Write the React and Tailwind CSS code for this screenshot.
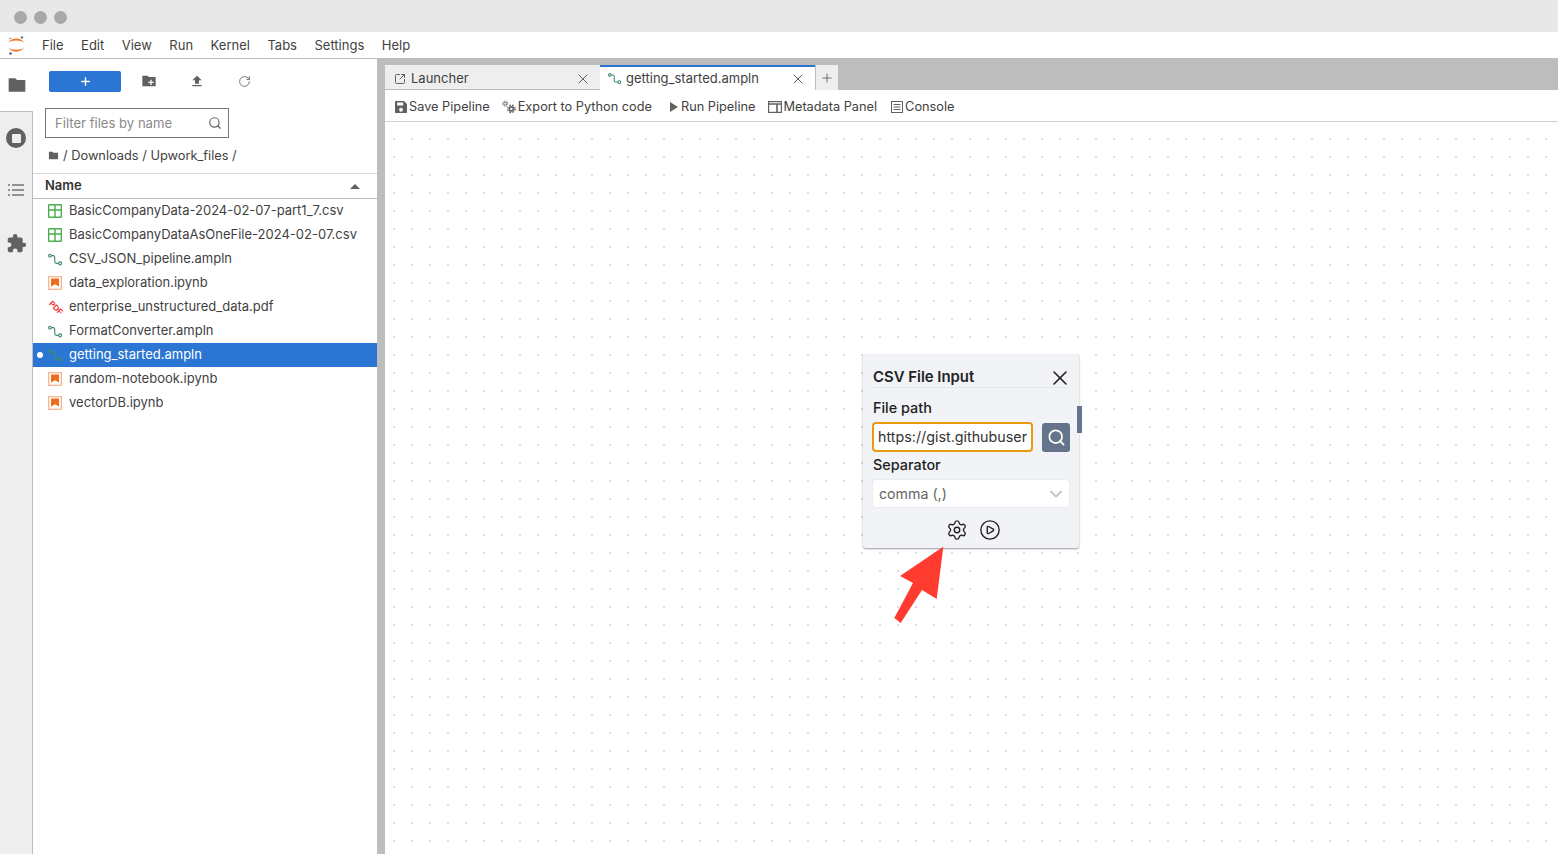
import { X, Search, Settings, CirclePlay, ChevronDown, Plus, RotateCw, SquareArrowOutUpRight } from 'lucide-react';

const menus = ['File', 'Edit', 'View', 'Run', 'Kernel', 'Tabs', 'Settings', 'Help'];

const files = [
  { name: 'BasicCompanyData-2024-02-07-part1_7.csv', type: 'csv' },
  { name: 'BasicCompanyDataAsOneFile-2024-02-07.csv', type: 'csv' },
  { name: 'CSV_JSON_pipeline.ampln', type: 'ampln' },
  { name: 'data_exploration.ipynb', type: 'nb' },
  { name: 'enterprise_unstructured_data.pdf', type: 'pdf' },
  { name: 'FormatConverter.ampln', type: 'ampln' },
  { name: 'getting_started.ampln', type: 'ampln', active: true },
  { name: 'random-notebook.ipynb', type: 'nb' },
  { name: 'vectorDB.ipynb', type: 'nb' },
];

function FolderIcon({ className, plus }) {
  return (
    <svg viewBox="0 0 24 24" className={className} fill="#616161">
      <path d="M10 4H2v16h20V6H12l-2-2z" />
      {plus && <path d="M14 10h2v3h3v2h-3v3h-2v-3h-3v-2h3z" fill="#fff" />}
    </svg>
  );
}

function PipelineIcon({ className = 'w-[15px] h-[15px]' }) {
  return (
    <svg viewBox="0 0 16 16" className={className} fill="none" stroke="#418a72" strokeWidth="1.3">
      <circle cx="2.2" cy="3.6" r="1.6" />
      <circle cx="13.8" cy="12.4" r="1.7" />
      <path d="M3.8 3.6h2.1c1.2 0 1.8.8 1.8 1.8v5c0 1.2.6 2 1.8 2h2.6" />
    </svg>
  );
}

function FileIcon({ type }) {
  if (type === 'csv') {
    return (
      <svg viewBox="0 0 14 14" className="w-[14px] h-[14px]" fill="none" stroke="#4caf50" strokeWidth="1.4">
        <rect x="0.7" y="0.7" width="12.6" height="12.6" rx="0.5" />
        <path d="M0.7 6h12.6M7 0.7v12.6" />
      </svg>
    );
  }
  if (type === 'nb') {
    return (
      <svg viewBox="0 0 14 14" className="w-[14px] h-[14px]">
        <rect x="0" y="0" width="14" height="14" rx="0.5" fill="#f9b58c" />
        <rect x="1.3" y="1.3" width="11.4" height="11.4" fill="#fff" />
        <path d="M3 2.5h8v8L7 8.2 3 10.5z" fill="#ef6c1a" />
      </svg>
    );
  }
  if (type === 'pdf') {
    return (
      <span className="block w-[15px] h-[15px] rotate-45 text-[8px] leading-[15px] font-bold text-center whitespace-nowrap text-[#ef2b2d] font-['Liberation_Sans',sans-serif]">
        PDF
      </span>
    );
  }
  return <PipelineIcon />;
}

function ToolbarItem({ icon, label, className = '' }) {
  return (
    <div className={`flex items-center ${className}`}>
      {icon}
      <span>{label}</span>
    </div>
  );
}

export default function App() {
  return (
    <div className="w-[1558px] h-[854px] overflow-hidden flex flex-col bg-white text-[13px] text-[#3f3f3f] font-['Inter','Noto_Sans',sans-serif]">
      {/* window chrome */}
      <div className="h-8 shrink-0 bg-[#e8e8e8] flex items-center gap-[7px] pl-[14px] pt-[2px]">
        <div className="w-[13px] h-[13px] rounded-full bg-[#a8a8a8]" />
        <div className="w-[13px] h-[13px] rounded-full bg-[#a8a8a8]" />
        <div className="w-[13px] h-[13px] rounded-full bg-[#a8a8a8]" />
      </div>

      {/* menu bar */}
      <div className="h-[27px] shrink-0 flex items-center border-b border-[#bdbdbd] pt-[1px]">
        <div className="w-[33px] pl-[8px] shrink-0">
          <svg viewBox="0 0 17 20" className="w-[17px] h-[20px]">
            <path d="M0.5 6.5C3 1.2 13 1.2 16 6.5 13 3.8 3 3.8 0.5 6.5z" fill="#f37726" />
            <path d="M0.5 11.5C3 17 13 17 16 11.5 13 14.4 3 14.4 0.5 11.5z" fill="#f37726" />
            <circle cx="14" cy="1.5" r="1.2" fill="#757575" />
            <circle cx="2" cy="2.5" r="0.8" fill="#757575" />
            <circle cx="2.5" cy="17.5" r="1.3" fill="#616161" />
          </svg>
        </div>
        <div className="flex items-center gap-[17.5px] pl-[9px]">
          {menus.map((m) => (
            <span key={m}>{m}</span>
          ))}
        </div>
      </div>

      <div className="flex-1 flex min-h-0">
        {/* icon rail */}
        <div className="w-[33px] shrink-0 flex flex-col">
          <div className="h-[52px] shrink-0 flex items-center justify-center">
            <FolderIcon className="w-[20px] h-[20px]" />
          </div>
          <div className="flex-1 bg-[#eeeeee] border-t border-r border-[#bdbdbd] flex flex-col items-center">
            <div className="mt-[16px] w-5 h-5 rounded-full bg-[#616161] flex items-center justify-center">
              <div className="w-[9px] h-[9px] rounded-[1px] bg-[#eeeeee]" />
            </div>
            <svg viewBox="0 0 16 12" className="mt-[36px] w-4 h-3" stroke="#757575" strokeWidth="1.4" fill="none">
              <path d="M4 1h12M4 6h12M4 11h12M0 1h2M0 6h2M0 11h2" />
            </svg>
            <svg viewBox="0 0 24 24" className="mt-[37px] w-[21px] h-[21px]" fill="#616161">
              <path d="M20.5 11H19V7a2 2 0 0 0-2-2h-4V3.5a2.5 2.5 0 0 0-5 0V5H4a2 2 0 0 0-2 2v3.8h1.5a2.7 2.7 0 0 1 0 5.4H2V20a2 2 0 0 0 2 2h3.8v-1.5a2.7 2.7 0 0 1 5.4 0V22H17a2 2 0 0 0 2-2v-4h1.5a2.5 2.5 0 0 0 0-5z" />
            </svg>
          </div>
        </div>

        {/* file browser */}
        <div className="w-[344px] shrink-0 flex flex-col">
          <div className="h-[49px] shrink-0 flex items-center pl-4 pb-[5px]">
            <div className="w-[72px] h-[21px] bg-[#2b76d2] rounded-[2px] flex items-center justify-center">
              <Plus className="w-[13px] h-[13px] text-white" strokeWidth={2.5} />
            </div>
            <FolderIcon plus className="ml-[20px] w-[16px] h-[16px]" />
            <svg viewBox="0 0 24 24" className="ml-[32px] w-[16px] h-[16px]" fill="#616161">
              <path d="M5 20h14v-2H5v2zM12 4l-7 7h4v5h6v-5h4l-7-7z" />
            </svg>
            <RotateCw className="ml-[33px] mt-[1px] w-[13px] h-[13px] text-[#616161]" strokeWidth={1.6} />
          </div>
          <div className="pl-3">
            <div className="w-[184px] h-[30px] border border-[#757575] flex items-center justify-between pl-[9px] pr-[6px]">
              <span className="text-[#8a8a8a] text-[13.1px] pt-[1px]">Filter files by name</span>
              <Search className="w-[14px] h-[14px] -mt-[1px] text-[#616161]" />
            </div>
          </div>
          <div className="h-[35px] shrink-0 flex items-center pl-[15px] gap-[4px] text-[12.8px]">
            <FolderIcon className="w-[11px] h-[11px]" />
            <span>/ Downloads / Upwork_files /</span>
          </div>
          <div className="h-[26px] shrink-0 flex items-center justify-between pl-3 pr-[17px] border-y border-[#d6d6d6] border-b-[#bdbdbd] font-semibold text-[#333]">
            <span>Name</span>
            <div className="w-0 h-0 border-x-[5px] border-x-transparent border-b-[5px] border-b-[#616161]" />
          </div>
          <div>
            {files.map((f) => (
              <div
                key={f.name}
                className={`relative h-6 flex items-center pl-[15px] gap-[7px] ${f.active ? 'bg-[#2b76d2] text-white' : ''}`}
              >
                {f.active && <div className="absolute left-1 top-[9px] w-[6px] h-[6px] rounded-full bg-white" />}
                <div className="w-[14px] flex justify-center">
                  <FileIcon type={f.type} />
                </div>
                <span>{f.name}</span>
              </div>
            ))}
          </div>
        </div>

        {/* splitter */}
        <div className="w-2 shrink-0 bg-[#bdbdbd]" />

        {/* main area */}
        <div className="flex-1 flex flex-col min-w-0">
          <div className="h-[31px] shrink-0 bg-[#bdbdbd] flex items-end">
            <div className="w-[215px] h-[25px] bg-[#eeeeee] flex items-center justify-between pl-[9px] pr-[9px] pt-[3px] border-b border-[#bdbdbd]">
              <div className="flex items-center gap-[5px]">
                <SquareArrowOutUpRight className="w-[12px] h-[12px] text-[#616161]" />
                <span>Launcher</span>
              </div>
              <X className="w-4 h-4 text-[#616161]" strokeWidth={1.5} />
            </div>
            <div className="w-[215px] h-[25px] bg-white border-t-2 border-[#2b76d2] flex items-center justify-between pl-[8px] pr-[9px]">
              <div className="flex items-center gap-[5px]">
                <PipelineIcon className="w-[13px] h-[13px]" />
                <span>getting_started.ampln</span>
              </div>
              <X className="w-4 h-4 text-[#616161]" strokeWidth={1.5} />
            </div>
            <div className="w-[23px] h-[25px] bg-[#eeeeee] flex items-center justify-center border-l border-[#bdbdbd]">
              <Plus className="w-[14px] h-[14px] text-[#616161]" strokeWidth={1.5} />
            </div>
          </div>

          <div className="h-8 shrink-0 flex items-center pl-[10px] pt-[2px] border-b border-[#d0d0d0] text-[12.75px]">
            <ToolbarItem
              label="Save Pipeline"
              icon={
                <svg viewBox="0 0 14 14" className="w-3 h-3 mr-[2px]" fill="#616161">
                  <path d="M1 0h9.5L14 3.5V13a1 1 0 0 1-1 1H1a1 1 0 0 1-1-1V1a1 1 0 0 1 1-1zm1.5 1.8v3.5h7V1.8h-7zM7 8a2.2 2.2 0 1 0 0 4.4A2.2 2.2 0 0 0 7 8z" />
                </svg>
              }
            />
            <ToolbarItem
              className="ml-[12px]"
              label="Export to Python code"
              icon={
                <svg viewBox="0 0 16 14" className="w-[15px] h-[14px] mr-px" fill="none" stroke="#616161">
                  <circle cx="3.5" cy="3.5" r="1.6" strokeWidth="1" />
                  <circle cx="3.5" cy="3.5" r="2.8" strokeWidth="1" strokeDasharray="1.2 1" />
                  <circle cx="10" cy="9" r="2.2" strokeWidth="1.8" />
                  <circle cx="10" cy="9" r="4" strokeWidth="1.4" strokeDasharray="1.8 1.4" />
                </svg>
              }
            />
            <ToolbarItem
              className="ml-[18px]"
              label="Run Pipeline"
              icon={<div className="mr-[3px] w-0 h-0 border-y-[5px] border-y-transparent border-l-[8px] border-l-[#616161]" />}
            />
            <ToolbarItem
              className="ml-[13px]"
              label="Metadata Panel"
              icon={
                <svg viewBox="0 0 14 12" className="w-[14px] h-3 mr-px" fill="none" stroke="#616161" strokeWidth="1.2">
                  <rect x="0.6" y="0.6" width="12.8" height="10.8" />
                  <path d="M0.6 3h12.8M9 3v8.4" strokeWidth="1.6" />
                </svg>
              }
            />
            <ToolbarItem
              className="ml-[14px]"
              label="Console"
              icon={
                <svg viewBox="0 0 12 12" className="w-3 h-3 mr-[2px]" fill="none" stroke="#616161" strokeWidth="1">
                  <rect x="0.5" y="0.5" width="11" height="11" />
                  <path d="M2.5 3.5h7M2.5 6h7M2.5 8.5h7" />
                </svg>
              }
            />
          </div>

          {/* pipeline canvas */}
          <div className="relative flex-1 bg-white bg-[radial-gradient(#dcdcdc_0.8px,transparent_1px)] bg-[size:18px_18px] bg-[position:0px_8px]">
            <div className="absolute left-[478px] top-[232px] w-[216px] h-[194px] bg-[#f1f3f7] rounded-[3px] shadow-[0_1px_2px_rgba(0,0,0,0.4)] px-[10px]">
              <div className="h-[34px] pt-[14px] flex items-center justify-between border-b border-[#e4e6ec] text-[14.9px] font-semibold text-[#222]">
                <span>CSV File Input</span>
                <X className="w-6 h-6 -mr-[3px] text-[#222]" strokeWidth={1.6} />
              </div>
              <div className="mt-[11px] text-[14.4px] font-medium text-[#222] leading-[17px]">File path</div>
              <div className="mt-[6px] flex items-center justify-between -ml-px -mr-px">
                <div className="w-[161px] h-[30px] bg-white border-2 border-[#eb9a10] rounded-[4px] flex items-center pl-[4px] overflow-hidden whitespace-nowrap text-[14.3px] text-[#333]">
                  https://gist.githubuser
                </div>
                <div className="w-7 h-[29px] bg-[#64748b] rounded-[3px] flex items-center justify-center">
                  <Search className="w-[19px] h-[19px] text-white" strokeWidth={2.2} />
                </div>
              </div>
              <div className="mt-[4px] text-[14.4px] font-medium text-[#222] leading-[17px]">Separator</div>
              <div className="mt-[7px] h-[27px] bg-white rounded-[2px] shadow-[0_0_1px_rgba(0,0,0,0.3)] flex items-center justify-between pl-[6px] pr-[3px] text-[14.2px] text-[#666]">
                <span>comma (,)</span>
                <ChevronDown className="w-[20px] h-[20px] text-[#c8c8c8]" strokeWidth={2.5} />
              </div>
              <div className="mt-[12px] pl-[5px] flex items-center justify-center gap-[11px]">
                <Settings className="w-[22px] h-[22px] text-[#222]" strokeWidth={1.5} />
                <CirclePlay className="w-[22px] h-[22px] text-[#222]" strokeWidth={1.5} />
              </div>
              <div className="absolute right-[-3px] top-[52px] w-[5px] h-[27px] bg-[#64748b]" />
            </div>
            {/* annotation arrow */}
            <svg viewBox="0 0 60 80" className="absolute left-[505px] top-[424px] w-[60px] h-[80px]">
              <path d="M53.3 0.7 L46.7 53 L32 44 L10.7 77 L4.3 72 L23 37 L10 30 z" fill="#ff3b30" />
            </svg>
          </div>
        </div>
      </div>
    </div>
  );
}
